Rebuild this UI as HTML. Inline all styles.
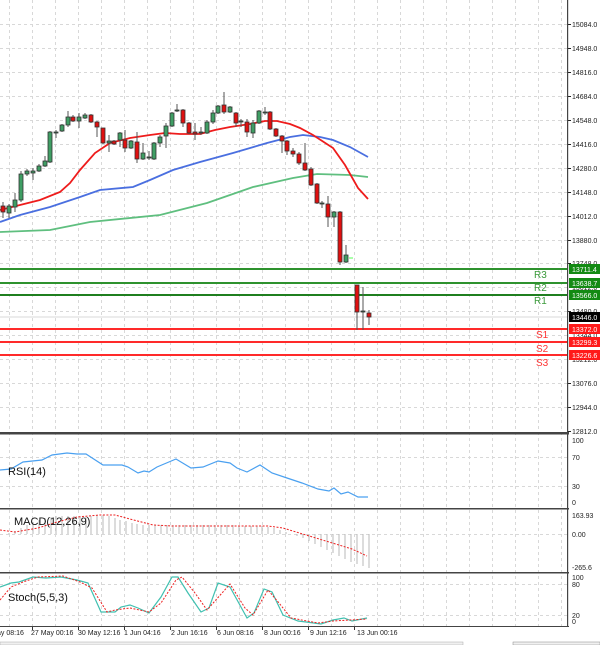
<!DOCTYPE html>
<html><head><meta charset="utf-8"><style>
html,body{margin:0;padding:0;background:#fff;width:600px;height:645px;overflow:hidden}
svg{display:block;font-family:"Liberation Sans",sans-serif}
</style></head><body>
<svg width="600" height="645" viewBox="0 0 600 645" xmlns="http://www.w3.org/2000/svg">
<rect width="600" height="645" fill="#fff"/>
<g stroke="#d8d8d8" stroke-width="1" stroke-dasharray="3,3">
<path d="M9.5 0V627M32.5 0V627M55.5 0V627M78.5 0V627M101.5 0V627M124.5 0V627M147.5 0V627M170.5 0V627M193.5 0V627M216.5 0V627M239.5 0V627M262.5 0V627M285.5 0V627M308.5 0V627M331.5 0V627M354.5 0V627M377.5 0V627M400.5 0V627M423.5 0V627M446.5 0V627M469.5 0V627M492.5 0V627M515.5 0V627M538.5 0V627M561.5 0V627"/>
<path d="M0 24.5H568M0 48.5H568M0 72.5H568M0 96.5H568M0 120.5H568M0 144.5H568M0 168.5H568M0 192.5H568M0 216.5H568M0 240.5H568M0 263.5H568M0 287.5H568M0 311.5H568M0 335.5H568M0 359.5H568M0 383.5H568M0 407.5H568"/>
<path d="M0 457.5H568M0 486.5H568M0 534.5H568M0 584.5H568M0 615.5H568"/>
</g>
<g font-size="7" fill="#222">
<text x="572" y="27">15084.0</text><text x="572" y="51">14948.0</text><text x="572" y="75">14816.0</text><text x="572" y="99">14684.0</text><text x="572" y="123">14548.0</text><text x="572" y="147">14416.0</text><text x="572" y="171">14280.0</text><text x="572" y="195">14148.0</text><text x="572" y="219">14012.0</text><text x="572" y="243">13880.0</text><text x="572" y="266">13748.0</text><text x="572" y="290">13612.0</text><text x="572" y="314">13480.0</text><text x="572" y="338">13344.0</text><text x="572" y="362">13212.0</text><text x="572" y="386">13076.0</text><text x="572" y="410">12944.0</text><text x="572" y="434">12812.0</text>
<text x="572" y="443">100</text><text x="572" y="460">70</text><text x="572" y="489">30</text><text x="572" y="505">0</text>
<text x="572" y="518">163.93</text><text x="572" y="537">0.00</text><text x="572" y="570">-265.6</text>
<text x="572" y="580">100</text><text x="572" y="587">80</text><text x="572" y="618">20</text><text x="572" y="624">0</text>
</g>
<g stroke="#222" stroke-width="1"><path d="M568 24.5h3M568 48.5h3M568 72.5h3M568 96.5h3M568 120.5h3M568 144.5h3M568 168.5h3M568 192.5h3M568 216.5h3M568 240.5h3M568 263.5h3M568 311.5h3M568 383.5h3M568 407.5h3M568 431.5h3"/></g>
<polyline fill="none" stroke="#5fbf7f" stroke-width="1.8" points="0,232 50,230 90,222 160,215 207,203 253,187 293,178 317,174 350,175 368,177"/>
<polyline fill="none" stroke="#4a6fe0" stroke-width="1.8" points="0,222 20,215 50,207 80,197 100,190 133,187 150,180 173,170 200,162 233,153 267,143 290,137 303,135 320,137 333,140 350,147 368,157"/>
<polyline fill="none" stroke="#ee1c1c" stroke-width="1.8" points="0,210 20,205 40,200 60,192 70,183 80,170 95,153 110,143 130,138 150,135 165,133 180,134 200,134 215,130 230,127 250,124 265,121 277,121 290,124 300,128 313,135 333,148 345,165 358,188 368,199"/>
<g stroke-width="2">
<path d="M0 269H568" stroke="#2e922e"/><path d="M0 283H568" stroke="#2e922e"/><path d="M0 295H568" stroke="#1f7f1f"/>
<path d="M0 317H568" stroke="#d8d8d8" stroke-width="1"/>
<path d="M0 329H568" stroke="#ff2a2a"/><path d="M0 342H568" stroke="#ff2a2a"/><path d="M0 355H568" stroke="#ff2a2a"/>
</g>
<g font-size="10">
<text x="534" y="278" fill="#3a9a3a">R3</text><text x="534" y="291" fill="#3a9a3a">R2</text><text x="534" y="304" fill="#3a9a3a">R1</text>
<text x="536" y="338" fill="#ff3333">S1</text><text x="536" y="352" fill="#ff3333">S2</text><text x="536" y="366" fill="#ff3333">S3</text>
</g>
<g font-size="7" fill="#fff">
<rect x="569" y="264" width="31" height="10" fill="#138a13"/><text x="572" y="272">13711.4</text>
<rect x="569" y="278" width="31" height="10" fill="#138a13"/><text x="572" y="286">13638.7</text>
<rect x="569" y="290" width="31" height="10" fill="#138a13"/><text x="572" y="298">13566.0</text>
<rect x="569" y="312" width="31" height="10" fill="#000"/><text x="572" y="320">13446.0</text>
<rect x="569" y="324" width="31" height="10" fill="#ff1a1a"/><text x="572" y="332">13372.0</text>
<rect x="569" y="337" width="31" height="10" fill="#ff1a1a"/><text x="572" y="345">13299.3</text>
<rect x="569" y="350" width="31" height="10" fill="#ff1a1a"/><text x="572" y="358">13226.6</text>
</g>
<g stroke="#555" stroke-width="1">
<path d="M3 202V218M9 204V218M15 193V212M21 171V202M27 169V176M33 168V180M39 164V172M45 156V167M50 131V163M56 130V138M62 124V132M68 111V127M73 115V122M79 113V128M85 113V119M91 114V123M97 121V137M103 128V144M109 135V152M114 140V145M120 132V147M125 130V152M131 140V149M137 132V163M143 143V160M149 151V160M154 142V160M160 135V147M166 123V148M172 112V127M177 104V112M183 109V127M189 122V134M195 123V140M201 127V135M207 120V134M213 110V124M218 105V114M224 92V114M230 106V113M236 112V127M241 119V127M247 119V137M253 120V138M259 110V124M265 107V115M270 111V130M276 128V137M282 135V153M287 140V155M293 148V157M299 152V165M305 143V171M311 167V186M317 183V204M322 201V208M328 196V227M334 211V227M340 211V265M346 245V263M357 285V330M363 287V330M369 310V325"/>
</g>
<g stroke="#333" stroke-width="0.8">
<g fill="#e01010">
<rect x="1" y="206" width="4" height="6"/><rect x="71" y="117" width="4" height="4"/><rect x="89" y="115" width="4" height="7"/><rect x="95" y="122" width="4" height="5"/><rect x="101" y="128" width="4" height="15"/><rect x="112" y="141" width="4" height="3"/><rect x="123" y="140" width="4" height="8"/><rect x="135" y="142" width="4" height="17"/><rect x="181" y="110" width="4" height="13"/><rect x="187" y="123" width="4" height="10"/><rect x="193" y="132" width="4" height="2"/><rect x="222" y="105" width="4" height="7"/><rect x="234" y="113" width="4" height="10"/><rect x="245" y="122" width="4" height="10"/><rect x="268" y="112" width="4" height="17"/><rect x="274" y="129" width="4" height="7"/><rect x="280" y="136" width="4" height="5"/><rect x="285" y="141" width="4" height="10"/><rect x="291" y="151" width="4" height="3"/><rect x="297" y="154" width="4" height="9"/><rect x="303" y="163" width="4" height="7"/><rect x="309" y="169" width="4" height="16"/><rect x="315" y="184" width="4" height="19"/><rect x="326" y="204" width="4" height="13"/><rect x="338" y="212" width="4" height="50"/><rect x="355" y="285" width="4" height="27"/><rect x="367" y="313" width="4" height="4"/>
</g>
<g fill="#3f9e64">
<rect x="7" y="206" width="4" height="7"/><rect x="13" y="200" width="4" height="7"/><rect x="19" y="174" width="4" height="26"/><rect x="25" y="171" width="4" height="3"/><rect x="31" y="171" width="4" height="2"/><rect x="37" y="166" width="4" height="5"/><rect x="43" y="161" width="4" height="5"/><rect x="48" y="132" width="4" height="30"/><rect x="54" y="132" width="4" height="1"/><rect x="60" y="125" width="4" height="6"/><rect x="66" y="117" width="4" height="8"/><rect x="77" y="117" width="4" height="4"/><rect x="83" y="115" width="4" height="3"/><rect x="107" y="141" width="4" height="2"/><rect x="118" y="133" width="4" height="7"/><rect x="129" y="141" width="4" height="7"/><rect x="141" y="153" width="4" height="6"/><rect x="147" y="157" width="4" height="1"/><rect x="152" y="143" width="4" height="16"/><rect x="158" y="137" width="4" height="6"/><rect x="164" y="126" width="4" height="10"/><rect x="170" y="113" width="4" height="13"/><rect x="175" y="110" width="4" height="1"/><rect x="199" y="132" width="4" height="1"/><rect x="205" y="122" width="4" height="11"/><rect x="211" y="113" width="4" height="9"/><rect x="216" y="106" width="4" height="7"/><rect x="228" y="107" width="4" height="5"/><rect x="239" y="121" width="4" height="1"/><rect x="251" y="123" width="4" height="10"/><rect x="257" y="111" width="4" height="12"/><rect x="263" y="112" width="4" height="1"/><rect x="320" y="203" width="4" height="1"/><rect x="332" y="212" width="4" height="5"/><rect x="344" y="255" width="4" height="7"/><rect x="361" y="311" width="4" height="1"/>
</g>
</g>
<path d="M349 258h4" stroke="#5f5" stroke-width="1"/>
<g fill="#444">
<rect x="0" y="432" width="569" height="2.5"/><rect x="0" y="508" width="569" height="1.5"/><rect x="0" y="572" width="569" height="1.5"/><rect x="0" y="626" width="569" height="1"/>
<rect x="567" y="0" width="1.2" height="627"/>
</g>
<polyline fill="none" stroke="#4aa0f0" stroke-width="1.2" points="0,470 11,469 23,462 42,460 52,455 67,453 77,454 86,454 103,465 122,465 128,467 138,473 144,471 149,472 157,467 176,459 191,468 203,467 218,461 230,463 237,468 247,472 260,465 272,473 287,478 302,483 318,489 329,491 334,488 341,494 348,492 358,497 368,497"/>
<text x="8" y="475" font-size="11" fill="#111">RSI(14)</text>
<path fill="none" stroke="#b8b8b8" stroke-width="1" d="M9 534V533M15 534V531M21 534V528M27 534V525M33 534V522M39 534V520M45 534V518M51 534V517M56 534V516M62 534V516M68 534V516M74 534V516M80 534V516M86 534V516M91 534V516M97 534V515M103 534V515M109 534V516M115 534V518M120 534V520M126 534V521M132 534V523M137 534V524M143 534V525M149 534V525M155 534V525M161 534V525M167 534V525M173 534V525M179 534V525M185 534V525M191 534V525M197 534V525M203 534V525M209 534V525M215 534V525M221 534V525M227 534V525M233 534V525M239 534V526M245 534V526M251 534V526M257 534V526M262 534V526M268 534V527M274 534V528M280 534V530M286 534V532M297 534V536M303 534V538M309 534V541M315 534V544M321 534V547M327 534V550M333 534V553M339 534V556M345 534V559M351 534V562M357 534V564M363 534V566M369 534V568"/>
<polyline fill="none" stroke="#ee2222" stroke-width="1" stroke-dasharray="2,1.5" points="0,530 15,532 38,528 57,522 77,517 100,515 115,515 130,519 153,525 172,526 268,526 283,528 306,535 329,542 352,549 367,556"/>
<text x="14" y="525" font-size="11" fill="#111">MACD(12,26,9)</text>
<polyline fill="none" stroke="#40c0b0" stroke-width="1.2" points="0,587 11,583 19,582 33,577 46,578 61,577 77,580 88,583 101,612 115,612 121,607 130,605 138,608 149,613 161,597 172,577 178,577 188,593 201,612 209,608 218,583 230,587 247,618 254,613 264,589 272,592 283,615 298,621 306,622 321,624 333,620 344,618 352,621 367,618"/>
<polyline fill="none" stroke="#ee2222" stroke-width="1" stroke-dasharray="2,1.5" points="0,600 11,587 23,582 38,577 63,576 80,582 92,588 107,612 115,610 130,608 149,612 161,603 176,580 182,577 195,593 207,610 230,584 245,608 253,615 268,590 279,603 291,618 318,623 333,621 367,619"/>
<text x="8" y="601" font-size="11" fill="#111">Stoch(5,5,3)</text>
<g stroke="#333"><path d="M32.5 627v3M78.5 627v3M124.5 627v3M170.5 627v3M216.5 627v3M262.5 627v3M308.5 627v3M354.5 627v3"/></g>
<g font-size="7" fill="#222">
<text x="-3" y="635">ay 08:16</text><text x="31" y="635">27 May 00:16</text><text x="78" y="635">30 May 12:16</text><text x="124" y="635">1 Jun 04:16</text><text x="171" y="635">2 Jun 16:16</text><text x="217" y="635">6 Jun 08:16</text><text x="264" y="635">8 Jun 00:16</text><text x="310" y="635">9 Jun 12:16</text><text x="357" y="635">13 Jun 00:16</text>
</g>
<rect x="0" y="642" width="463" height="3" fill="#f0f0f0" stroke="#aaa" stroke-width="0.5"/>
<rect x="513" y="642" width="87" height="3" fill="#f0f0f0" stroke="#888" stroke-width="0.5"/>
</svg>
</body></html>
